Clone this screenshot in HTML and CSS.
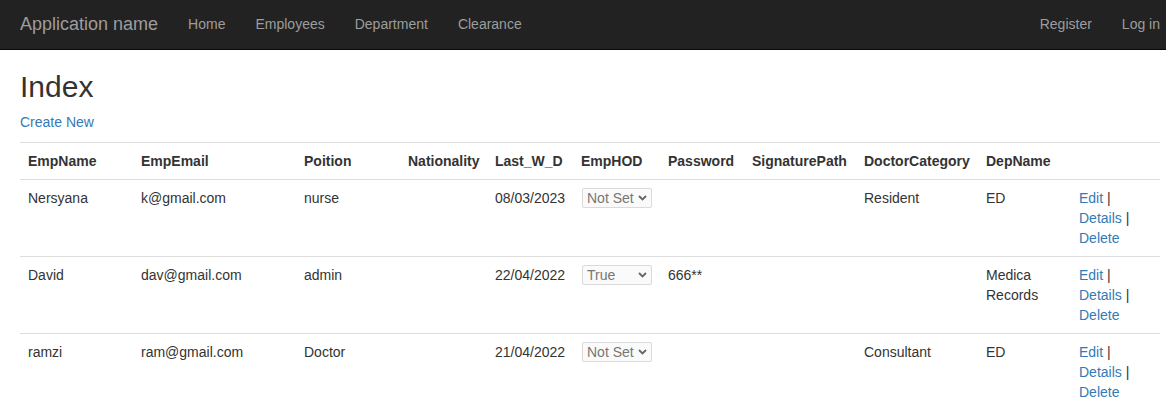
FILE: index.html
```html
<!DOCTYPE html>
<html>
<head>
<meta charset="utf-8">
<title>Index - Application name</title>
<link rel="stylesheet" href="styles.css">
</head>
<body>
<nav class="navbar">
  <a class="brand" href="#">Application name</a>
  <ul class="nav">
    <li><a href="#">Home</a></li>
    <li><a href="#">Employees</a></li>
    <li><a href="#">Department</a></li>
    <li><a href="#">Clearance</a></li>
  </ul>
  <ul class="nav nav-right">
    <li><a href="#">Register</a></li>
    <li><a href="#">Log in</a></li>
  </ul>
</nav>
<main class="body-content">
  <h2 class="title">Index</h2>
  <p class="create"><a href="#">Create New</a></p>
  <table class="table">
    <colgroup>
      <col class="c1"><col class="c2"><col class="c3"><col class="c4"><col class="c5"><col class="c6"><col class="c7"><col class="c8"><col class="c9"><col class="c10"><col class="c11">
    </colgroup>
    <tr>
      <th>EmpName</th><th>EmpEmail</th><th>Poition</th><th>Nationality</th><th>Last_W_D</th><th>EmpHOD</th><th>Password</th><th>SignaturePath</th><th>DoctorCategory</th><th>DepName</th><th></th>
    </tr>
    <tr>
      <td>Nersyana</td><td>k@gmail.com</td><td>nurse</td><td></td><td>08/03/2023</td>
      <td><span class="sel"><select class="tri" disabled><option>Not Set</option><option>True</option><option>False</option></select><svg class="chev" viewBox="0 0 9 6" width="9" height="6"><path d="M1 1 L4.5 4.5 L8 1" fill="none" stroke="#666" stroke-width="1.8"/></svg></span></td>
      <td></td><td></td><td>Resident</td><td>ED</td>
      <td><a href="#">Edit</a> | <a href="#">Details</a> | <a href="#">Delete</a></td>
    </tr>
    <tr>
      <td>David</td><td>dav@gmail.com</td><td>admin</td><td></td><td>22/04/2022</td>
      <td><span class="sel"><select class="tri" disabled><option>Not Set</option><option selected>True</option><option>False</option></select><svg class="chev" viewBox="0 0 9 6" width="9" height="6"><path d="M1 1 L4.5 4.5 L8 1" fill="none" stroke="#666" stroke-width="1.8"/></svg></span></td>
      <td>666**</td><td></td><td></td><td>Medica Records</td>
      <td><a href="#">Edit</a> | <a href="#">Details</a> | <a href="#">Delete</a></td>
    </tr>
    <tr>
      <td>ramzi</td><td>ram@gmail.com</td><td>Doctor</td><td></td><td>21/04/2022</td>
      <td><span class="sel"><select class="tri" disabled><option>Not Set</option><option>True</option><option>False</option></select><svg class="chev" viewBox="0 0 9 6" width="9" height="6"><path d="M1 1 L4.5 4.5 L8 1" fill="none" stroke="#666" stroke-width="1.8"/></svg></span></td>
      <td></td><td></td><td>Consultant</td><td>ED</td>
      <td><a href="#">Edit</a> | <a href="#">Details</a> | <a href="#">Delete</a></td>
    </tr>
  </table>
</main>
</body>
</html>
```
FILE: styles.css
```css
* { box-sizing: border-box; }
html, body { margin: 0; padding: 0; }
body {
  font-family: "Liberation Sans", Arial, Helvetica, sans-serif;
  font-size: 14px;
  line-height: 20px;
  color: #333;
  background: #fff;
  overflow: hidden;
}
a { color: #337ab7; text-decoration: none; }

.navbar {
  display: flex;
  align-items: stretch;
  height: 50px;
  background: #222;
  border-bottom: 1px solid #080808;
  padding-left: 5px;
}
.brand {
  display: block;
  padding: 14px 15px 15px;
  font-size: 18px;
  line-height: 20px;
  color: #9d9d9d;
}
.nav {
  display: flex;
  list-style: none;
  margin: 0;
  padding: 0;
}
.nav a {
  display: block;
  padding: 14px 15px 15px;
  line-height: 20px;
  color: #9d9d9d;
}
.nav-right {
  margin-left: auto;
  margin-right: -9px;
}

.body-content {
  padding: 0 6px 0 20px;
}
.title {
  margin: 20px 0 9px;
  font-size: 30px;
  font-weight: 500;
  line-height: 33px;
  color: #333;
}
.create {
  margin: 0 0 10px;
}

.table {
  width: 1140px;
  table-layout: fixed;
  border-collapse: collapse;
  border-spacing: 0;
}
.c1 { width: 113px; }
.c2 { width: 163px; }
.c3 { width: 104px; }
.c4 { width: 87px; }
.c5 { width: 86px; }
.c6 { width: 87px; }
.c7 { width: 84px; }
.c8 { width: 112px; }
.c9 { width: 122px; }
.c10 { width: 93px; }
.c11 { width: 89px; }
.table th, .table td {
  padding: 8px;
  line-height: 20px;
  vertical-align: top;
  text-align: left;
  border-top: 1px solid #ddd;
}
.table th { font-weight: bold; }

.sel {
  position: relative;
  display: inline-block;
  margin-left: 1px;
  vertical-align: top;
}
.tri {
  display: block;
  width: 70px;
  height: 20px;
  margin: 0;
  padding: 0 0 0 4px;
  -webkit-appearance: none;
  appearance: none;
  font-family: "Liberation Sans", Arial, sans-serif;
  font-size: 14px;
  line-height: 18px;
  color: #767676;
  background-color: #fafafa;
  border: 1px solid #dadada;
  border-radius: 2px;
  opacity: 1;
}
.chev {
  position: absolute;
  right: 5px;
  top: 7px;
  pointer-events: none;
}
```
